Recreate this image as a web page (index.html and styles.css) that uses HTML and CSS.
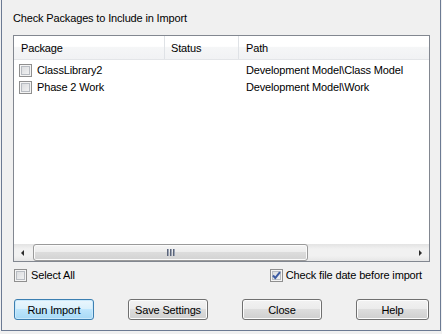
FILE: index.html
```html
<!DOCTYPE html>
<html lang="en">
<head>
  <meta charset="UTF-8">
  <title>Import Packages</title>
  <link rel="stylesheet" href="styles.css">
</head>
<body>
  <div class="dialog">
    <div class="title">Check Packages to Include in Import</div>

    <div class="list">
      <div class="list-header">
        <div class="col col-package">Package</div>
        <div class="col col-status">Status</div>
        <div class="col col-path">Path</div>
      </div>

      <div class="rows">
        <div class="row">
          <div class="col col-package"><span class="check"></span>ClassLibrary2</div>
          <div class="col col-status"></div>
          <div class="col col-path">Development Model\Class Model</div>
        </div>
        <div class="row">
          <div class="col col-package"><span class="check"></span>Phase 2 Work</div>
          <div class="col col-status"></div>
          <div class="col col-path">Development Model\Work</div>
        </div>
      </div>

      <div class="hscroll">
        <div class="arrow-btn"><span class="arrow-left"></span></div>
        <div class="track">
          <div class="thumb"><span class="grip"></span></div>
        </div>
        <div class="arrow-btn"><span class="arrow-right"></span></div>
      </div>
    </div>

    <div class="options">
      <label class="option"><span class="check"></span>Select All</label>
      <label class="option">
        <span class="check checked">
          <svg width="11" height="11" viewBox="0 0 11 11"><path d="M2 5.5 L4.3 8 L9 2.2" fill="none" stroke="#3d5ca3" stroke-width="2"/></svg>
        </span>Check file date before import
      </label>
    </div>

    <div class="buttons">
      <button class="btn btn-default">Run Import</button>
      <button class="btn">Save Settings</button>
      <button class="btn">Close</button>
      <button class="btn btn-help">Help</button>
    </div>
  </div>
</body>
</html>
```

FILE: styles.css
```css
* {
  box-sizing: border-box;
}

body {
  margin: 0;
  background: #f0f0f0;
  font-family: "Liberation Sans", Arial, sans-serif;
  font-size: 11px;
  letter-spacing: -0.15px;
  color: #000;
}

.dialog {
  width: 440px;
  height: 331px;
  margin-left: 1px;
  border: 1px solid #6b7a93;
  border-top: none;
  padding: 0 10px 0 11px;
  display: flex;
  flex-direction: column;
}

.title {
  height: 35px;
  padding-top: 11px;
  line-height: 14px;
}

.list {
  width: 417px;
  height: 227px;
  border: 1px solid #828790;
  background: #fff;
  display: flex;
  flex-direction: column;
}

.list-header {
  display: flex;
  height: 24px;
  border-bottom: 1px solid #e3e5e8;
  background: linear-gradient(#ffffff, #ffffff 45%, #f5f6f7 50%, #f1f2f4);
}

.list-header .col {
  padding-top: 2px;
  line-height: 21px;
  border-right: 1px solid #dfe2e6;
}

.list-header .col-path {
  border-right: none;
}

.col {
  white-space: nowrap;
  overflow: hidden;
}

.col-package {
  width: 151px;
  padding-left: 7px;
}

.col-status {
  width: 74px;
  padding-left: 6px;
}

.col-path {
  flex: 1;
  padding-left: 7px;
}

.rows {
  flex: 1;
  padding-top: 2px;
}

.row {
  display: flex;
  height: 17px;
  line-height: 17px;
}

.row .col-package {
  display: flex;
  align-items: center;
  padding-left: 5px;
}

.row .check {
  margin-right: 5px;
}

.check {
  display: inline-flex;
  align-items: center;
  justify-content: center;
  flex: none;
  width: 13px;
  height: 13px;
  border: 1px solid #8f8f8f;
  background: linear-gradient(135deg, #d6d8db, #f6f6f6);
  box-shadow: inset 0 0 0 1px #f4f4f4, inset 0 0 0 2px #b8bcc2;
}

.check.checked svg {
  display: block;
}

.hscroll {
  display: flex;
  height: 17px;
  background: linear-gradient(#e3e3e3, #f1f1f1 30%, #f1f1f1 70%, #e6e6e6);
}

.arrow-btn {
  width: 17px;
  display: flex;
  align-items: center;
  justify-content: center;
}

.arrow-left {
  border-top: 3px solid transparent;
  border-bottom: 3px solid transparent;
  border-right: 3px solid #2c2c2c;
}

.arrow-right {
  border-top: 3px solid transparent;
  border-bottom: 3px solid transparent;
  border-left: 3px solid #2c2c2c;
}

.track {
  flex: 1;
  padding: 0 2px;
}

.thumb {
  width: 275px;
  height: 17px;
  border: 1px solid #9a9a9a;
  border-radius: 3px;
  background: linear-gradient(to bottom, #f4f4f4, #ececec 50%, #dcdcdc 50%, #d2d2d2);
  box-shadow: inset 0 0 0 1px #fbfbfb;
  display: flex;
  align-items: center;
  justify-content: center;
}

.grip {
  width: 8px;
  height: 7px;
  background: repeating-linear-gradient(to right, #5b6478 0 1px, #9aa3b5 1px 2px, transparent 2px 3px);
}

.options {
  display: flex;
  justify-content: space-between;
  height: 18px;
  margin-top: 4px;
  padding: 0 8px 0 1px;
}

.option {
  display: flex;
  align-items: center;
  line-height: 18px;
}

.option .check {
  margin-right: 4px;
}

.option:last-child .check {
  margin-right: 3px;
}

.buttons {
  display: flex;
  gap: 34px;
  margin-top: 15px;
  padding-left: 1px;
}

.btn {
  width: 80px;
  height: 21px;
  padding: 0;
  font-family: "Liberation Sans", Arial, sans-serif;
  font-size: 11px;
  letter-spacing: -0.15px;
  color: #000;
  border: 1px solid #707070;
  border-radius: 3px;
  background: linear-gradient(#f2f2f2, #ebebeb 50%, #dddddd 50%, #cfcfcf);
  box-shadow: inset 0 0 0 1px #fcfcfc;
}

.btn-default {
  border-color: #3c7fb1;
  background: linear-gradient(#eaf6fd, #d9f0fc 50%, #bee6fd 50%, #a7d9f5);
  box-shadow: inset 0 0 0 1px #cbe9fb;
}

.btn-help {
  width: 73px;
}
```
